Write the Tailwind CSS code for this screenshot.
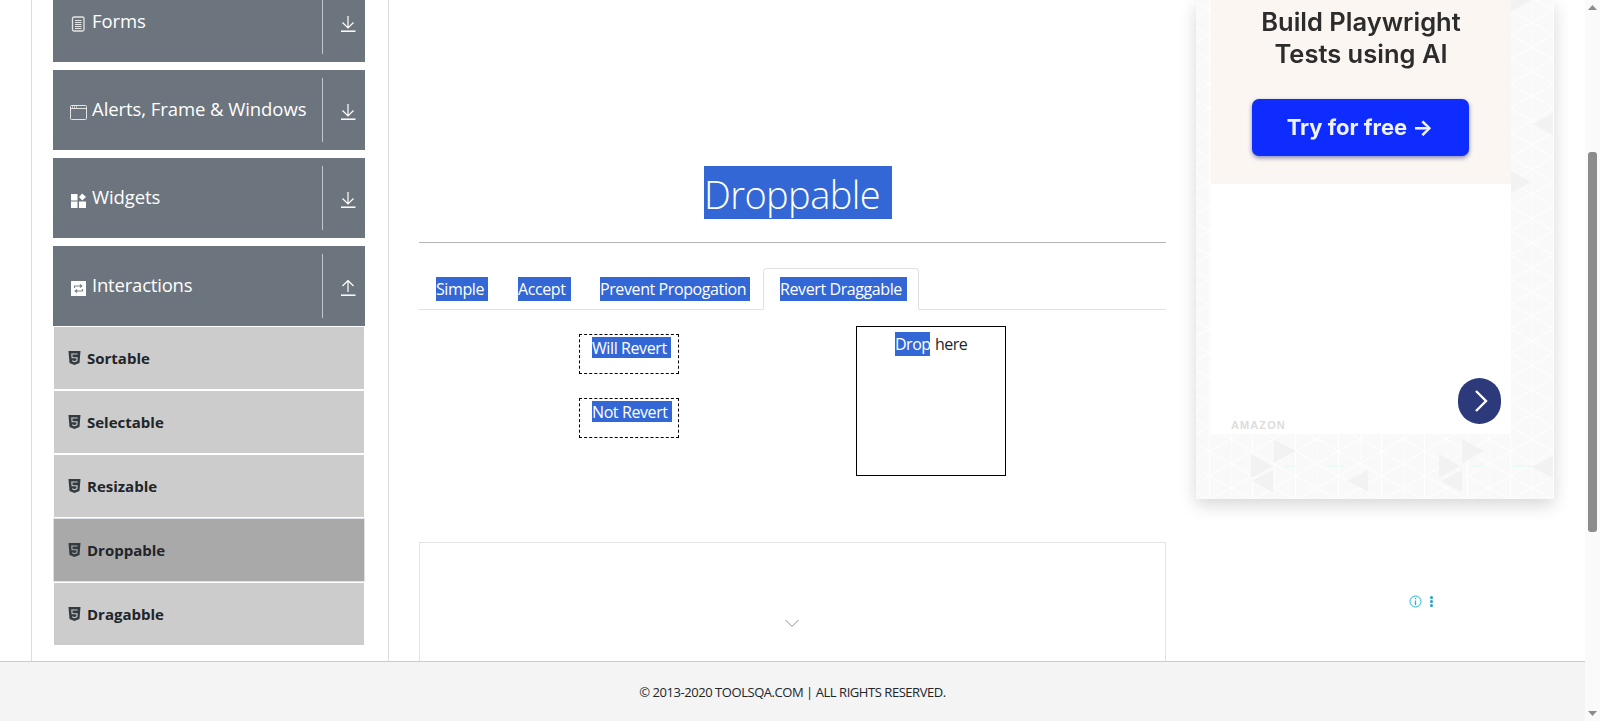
<!DOCTYPE html>
<html lang="en">
<head>
    <meta charset="UTF-8">
    <meta name="viewport" content="width=device-width, initial-scale=1.0">
    <title>Droppable</title>
    <script src="https://cdn.jsdelivr.net/npm/@tailwindcss/browser@4"></script>
</head>
<body class="overflow-hidden bg-white font-['Open_Sans',sans-serif]">
<div class="relative flex h-[721px] w-[1600px] overflow-hidden">
    <!-- page, scrolled part way down -->
    <div class="flex w-[1585px] pl-[31px]">
        <!-- left menu -->
        <aside class="w-[358px] h-[740px] -mt-[18px] border-x border-[#ddd] pl-[21px] pr-[23px] shrink-0">
            <div class="flex h-[80px] items-center bg-[#6c747d] text-white">
                <div class="flex flex-1 items-center pl-[18px]">
                    <svg class="w-[15px] h-[16px] mt-[4px]" viewBox="0 0 15 16" fill="none" stroke="#e4e4e4"><rect x="1.5" y="1" width="11.5" height="14" rx="1.5" stroke-width="1.3"/><path d="M4 4.5h6.500M4 6.500h6.500M4 8.500h6.500M4 10.500h6.500M4 12.500h6.500" stroke-width="1"/></svg>
                    <span class="ml-[6px] pb-[2px] text-[18.500px] tracking-[-0.1px]">Forms</span>
                </div>
                <div class="flex h-[64px] w-[43px] items-center justify-center border-l border-[#c2c6ca]">
                    <svg class="w-[16px] h-[16px] mt-[4px] ml-[7px]" viewBox="0 0 16 16" fill="none" stroke="#fff" stroke-width="1.2"><path d="M8 0v12M2.500 6.500 8 12l5.500-5.500"/><path d="M1 15.200h14.500" stroke-width="1.500"/></svg>
                </div>
            </div>
            <div class="flex h-[80px] mt-[8px] items-center bg-[#6c747d] text-white">
                <div class="flex flex-1 items-center pl-[17px]">
                    <svg class="w-[17px] h-[15px] mt-[4px]" viewBox="0 0 17 15" fill="none" stroke="#e4e4e4"><rect x="0.500" y="0.500" width="16" height="14" rx="1"/><path d="M0.500 3.500h16"/><path d="M2 2h1M4 2h1M6 2h1" stroke="#fff"/></svg>
                    <span class="ml-[5px] pb-[2px] text-[18.500px] tracking-[-0.07px] whitespace-nowrap">Alerts, Frame &amp; Windows</span>
                </div>
                <div class="flex h-[64px] w-[43px] items-center justify-center border-l border-[#c2c6ca]">
                    <svg class="w-[16px] h-[16px] mt-[4px] ml-[7px]" viewBox="0 0 16 16" fill="none" stroke="#fff" stroke-width="1.2"><path d="M8 0v12M2.500 6.500 8 12l5.500-5.500"/><path d="M1 15.200h14.500" stroke-width="1.500"/></svg>
                </div>
            </div>
            <div class="flex h-[80px] mt-[8px] items-center bg-[#6c747d] text-white">
                <div class="flex flex-1 items-center pl-[18px]">
                    <svg class="w-[15px] h-[15px] mt-[4px]" viewBox="0 0 15 15" fill="#fff"><rect x="0" y="1" width="6.500" height="6.500"/><rect x="0" y="8.500" width="6.500" height="6.500"/><rect x="8" y="8.500" width="7" height="6.500"/><path d="M11.200 0.500 15 4l-3.800 3.500L8 4z"/></svg>
                    <span class="ml-[6px] pb-[2px] text-[18.500px] tracking-[-0.1px]">Widgets</span>
                </div>
                <div class="flex h-[64px] w-[43px] items-center justify-center border-l border-[#c2c6ca]">
                    <svg class="w-[16px] h-[16px] mt-[4px] ml-[7px]" viewBox="0 0 16 16" fill="none" stroke="#fff" stroke-width="1.2"><path d="M8 0v12M2.500 6.500 8 12l5.500-5.500"/><path d="M1 15.200h14.500" stroke-width="1.500"/></svg>
                </div>
            </div>
            <div class="flex h-[80px] mt-[8px] items-center bg-[#6c747d] text-white">
                <div class="flex flex-1 items-center pl-[18px]">
                    <svg class="w-[15px] h-[15px] mt-[4px]" viewBox="0 0 15 15"><rect width="15" height="15" fill="#fff"/><path d="M3.500 7V5h7M9 3.500 10.800 5 9 6.500M11.500 8v2h-7M6 8.500 4.200 10 6 11.500" fill="none" stroke="#7b8289" stroke-width="1.200"/></svg>
                    <span class="ml-[6px] pb-[2px] text-[18.500px] tracking-[-0.2px]">Interactions</span>
                </div>
                <div class="flex h-[64px] w-[43px] items-center justify-center border-l border-[#c2c6ca]">
                    <svg class="w-[16px] h-[16px] mt-[4px] ml-[7px]" viewBox="0 0 16 16" fill="none" stroke="#fff" stroke-width="1.2"><path d="M8 12V0.500M2.500 6 8 0.500 13.500 6"/><path d="M1 15.200h14.500" stroke-width="1.500"/></svg>
                </div>
            </div>
            <ul class="text-[15px] font-bold text-[#212529]">
                <li class="flex h-[64px] items-center border border-white bg-[#ccc] pl-[14px]">
                    <svg class="w-[13px] h-[14px]" viewBox="0 0 13 14"><path d="M0.500 0h12l-1 12-5 2-5-2z" fill="#343a40"/><path d="M9.500 3H3.800l.3 3.800h5l-.3 3-2.300.9-2.300-.9" fill="none" stroke="#ccc" stroke-width="1.100"/></svg>
                    <span class="ml-[6px]">Sortable</span>
                </li>
                <li class="flex h-[64px] items-center border border-white bg-[#ccc] pl-[14px]">
                    <svg class="w-[13px] h-[14px]" viewBox="0 0 13 14"><path d="M0.500 0h12l-1 12-5 2-5-2z" fill="#343a40"/><path d="M9.500 3H3.800l.3 3.800h5l-.3 3-2.300.9-2.300-.9" fill="none" stroke="#ccc" stroke-width="1.100"/></svg>
                    <span class="ml-[6px]">Selectable</span>
                </li>
                <li class="flex h-[64px] items-center border border-white bg-[#ccc] pl-[14px]">
                    <svg class="w-[13px] h-[14px]" viewBox="0 0 13 14"><path d="M0.500 0h12l-1 12-5 2-5-2z" fill="#343a40"/><path d="M9.500 3H3.800l.3 3.800h5l-.3 3-2.300.9-2.300-.9" fill="none" stroke="#ccc" stroke-width="1.100"/></svg>
                    <span class="ml-[6px]">Resizable</span>
                </li>
                <li class="flex h-[64px] items-center border border-[#dee2e6] bg-[#a9a9a9] pl-[14px]">
                    <svg class="w-[13px] h-[14px]" viewBox="0 0 13 14"><path d="M0.500 0h12l-1 12-5 2-5-2z" fill="#343a40"/><path d="M9.500 3H3.800l.3 3.800h5l-.3 3-2.300.9-2.300-.9" fill="none" stroke="#a9a9a9" stroke-width="1.100"/></svg>
                    <span class="ml-[6px]">Droppable</span>
                </li>
                <li class="flex h-[64px] items-center border border-white bg-[#ccc] pl-[14px]">
                    <svg class="w-[13px] h-[14px]" viewBox="0 0 13 14"><path d="M0.500 0h12l-1 12-5 2-5-2z" fill="#343a40"/><path d="M9.500 3H3.800l.3 3.800h5l-.3 3-2.300.9-2.300-.9" fill="none" stroke="#ccc" stroke-width="1.100"/></svg>
                    <span class="ml-[6px]">Dragabble</span>
                </li>
            </ul>
        </aside>

        <!-- main column -->
        <main class="ml-[30px] w-[747px] shrink-0 pt-[166px]">
            <div class="flex justify-center pl-[11px]">
                <h1 class="h-[53px] w-[188px] bg-[#3367d6] text-[38px] leading-[56px] font-light tracking-[-0.6px] text-white">Droppable</h1>
            </div>
            <div class="mt-[23px] h-[1px] bg-[#b5b5b5]"></div>

            <div class="mt-[25px] flex h-[42px] border-b border-[#dee2e6] pl-[17px] text-[16px] text-white">
                <div class="mt-[9px] h-[24px] w-[52px] bg-[#3367d6] leading-[24px] tracking-[-0.4px]">Simple</div>
                <div class="ml-[30px] mt-[9px] h-[24px] w-[53px] bg-[#3367d6] leading-[24px] tracking-[-0.4px]">Accept</div>
                <div class="ml-[29px] mt-[9px] h-[24px] w-[150px] bg-[#3367d6] leading-[24px] tracking-[-0.4px]">Prevent Propogation</div>
                <div class="ml-[13px] h-[42px] w-[156px] rounded-t border border-b-white border-[#dee2e6] pl-[16px] pt-[8px] bg-white">
                    <div class="h-[24px] w-[127px] bg-[#3367d6] leading-[24px] tracking-[-0.4px] whitespace-nowrap">Revert Draggable</div>
                </div>
            </div>

            <div class="flex pt-[16px] text-[16px]">
                <div class="ml-[160px] w-[277px] pt-[8px] text-white">
                    <div class="h-[40px] w-[100px] border border-dashed border-black pl-[12px] pt-[2px]">
                        <div class="h-[21px] w-[79px] bg-[#3367d6] leading-[23px] tracking-[-0.4px] whitespace-nowrap">Will Revert</div>
                    </div>
                    <div class="mt-[24px] h-[40px] w-[100px] border border-dashed border-black pl-[12px] pt-[2px]">
                        <div class="h-[21px] w-[80px] bg-[#3367d6] leading-[23px] tracking-[-0.4px] whitespace-nowrap">Not Revert</div>
                    </div>
                </div>
                <div class="flex h-[150px] w-[150px] items-start justify-start border border-black pl-[38px] pt-[5px] leading-[24px] tracking-[-0.5px] text-[#212529]">
                    <span class="h-[24px] w-[35px] bg-[#3367d6] text-white">Drop</span><span class="ml-[5px]">here</span>
                </div>
            </div>

            <div class="mt-[66px] flex h-[140px] justify-center border border-[#e3e3e3] pt-[76px]">
                <svg class="w-[14px] h-[9px] -ml-[1px]" viewBox="0 0 14 9" fill="none" stroke="#8c8c8c" stroke-width="1"><path d="M0.500 1 7 7.500 13.500 1"/></svg>
            </div>
        </main>

        <!-- right ad column -->
        <aside class="ml-[30px] w-[358px] shrink-0">
            <div class="relative h-[499px] w-[358px] bg-[#f9f9f9] pl-[15px] shadow-[0_6px_16px_rgba(0,0,0,0.16)]">
                <svg class="absolute inset-0 h-full w-full" viewBox="0 0 358 499" preserveAspectRatio="none">
                    <defs>
                        <pattern id="tri" width="43" height="49" patternUnits="userSpaceOnUse" x="35" y="47">
                            <path d="M0 0V49M21.500 0V49M0 0 43 24.500M0 24.500 43 0M0 24.500 43 49M0 49 43 24.500" fill="none" stroke="#fff" stroke-width="1"/>
                        </pattern>
                    </defs>
                    <rect width="358" height="499" fill="url(#tri)"/>
                    <path d="M78 463v-24l22 12zM55 478v-24l22 12zM266 463v-24l21 12zM243 478v-24l21 12zM77 492v-22l-21 11zM172 492v-22l-21 11zM266 492v-22l-21 11zM357 478v-22l-21 11zM315 12v-24l20 12zM315 193v-22l20 11zM357 135v-22l-20 11z" fill="#f2f2f2"/>
                    <path d="M87 466h14M129 466h20M274 466h15M316 466h20" stroke="#e6fbfa" stroke-width="1.500"/>
                </svg>
                <div class="relative flex h-[434px] w-[300px] flex-col bg-white">
                    <div class="flex h-[184px] flex-col items-center bg-[#fbf6f1] font-['Inter',sans-serif] blur-[0.3px]">
                        <p class="pt-[6px] text-center text-[25.500px] leading-[32px] font-semibold text-[#2c2c2c]">Build Playwright<br>Tests using AI</p>
                        <div class="-ml-[2px] mt-[29px] flex h-[57px] w-[217px] items-center justify-center rounded-[7px] bg-[#0f2cff] pb-[1px] text-[22px] font-bold text-[#eef1ff] shadow-[0_2px_4px_rgba(20,30,120,0.5)]">Try for free →</div>
                    </div>
                    <div class="flex flex-1 items-end pl-[20px] pb-[1px]">
                        <span class="font-['Liberation_Sans',sans-serif] text-[11px] font-bold tracking-[1.100px] text-[#dcdcdc]">AMAZON</span>
                    </div>
                    <div class="absolute left-[247px] top-[378px] flex h-[46px] w-[43px] items-center justify-center rounded-full bg-[#2c3a7c]">
                        <svg class="w-[14px] h-[22px] ml-[2px]" viewBox="0 0 14 22" fill="none" stroke="#fff" stroke-width="2.400"><path d="M2 1l10 10L2 21"/></svg>
                    </div>
                </div>
            </div>
            <div class="mt-[96px] flex items-center pl-[213px]">
                <svg class="w-[13px] h-[13px]" viewBox="0 0 13 13" fill="none" stroke="#1fb6d6"><circle cx="6.500" cy="6.500" r="5.500"/><path d="M6.500 5.500v4.500M6.500 3v1.300" stroke-width="1.300"/></svg>
                <svg class="ml-[8px] w-[3px] h-[11px]" viewBox="0 0 3 11" fill="#10a5c8"><circle cx="1.500" cy="1.500" r="1.500"/><circle cx="1.500" cy="5.500" r="1.500"/><circle cx="1.500" cy="9.500" r="1.500"/></svg>
            </div>
        </aside>
    </div>

    <!-- browser scrollbar -->
    <div class="flex w-[15px] flex-col items-center bg-[#fafafa]">
        <svg class="mt-[5px] w-[9px] h-[5px]" viewBox="0 0 9 5" fill="#8c8c8c"><path d="M4.500 0 9 5H0z"/></svg>
        <div class="mt-[142px] h-[380px] w-[9px] rounded-[3px] bg-[#8c8c8c]"></div>
        <svg class="mt-auto mb-[5px] w-[9px] h-[5px]" viewBox="0 0 9 5" fill="#8c8c8c"><path d="M4.500 5 9 0H0z"/></svg>
    </div>

    <!-- fixed footer -->
    <footer class="absolute bottom-0 left-0 flex h-[60px] w-[1585px] items-center justify-center border-t border-[#ccc] bg-[#f4f4f4] pt-[3px] text-[13px] tracking-[-0.45px] text-[#212529]">© 2013-2020 TOOLSQA.COM | ALL RIGHTS RESERVED.</footer>
</div>
</body>
</html>
